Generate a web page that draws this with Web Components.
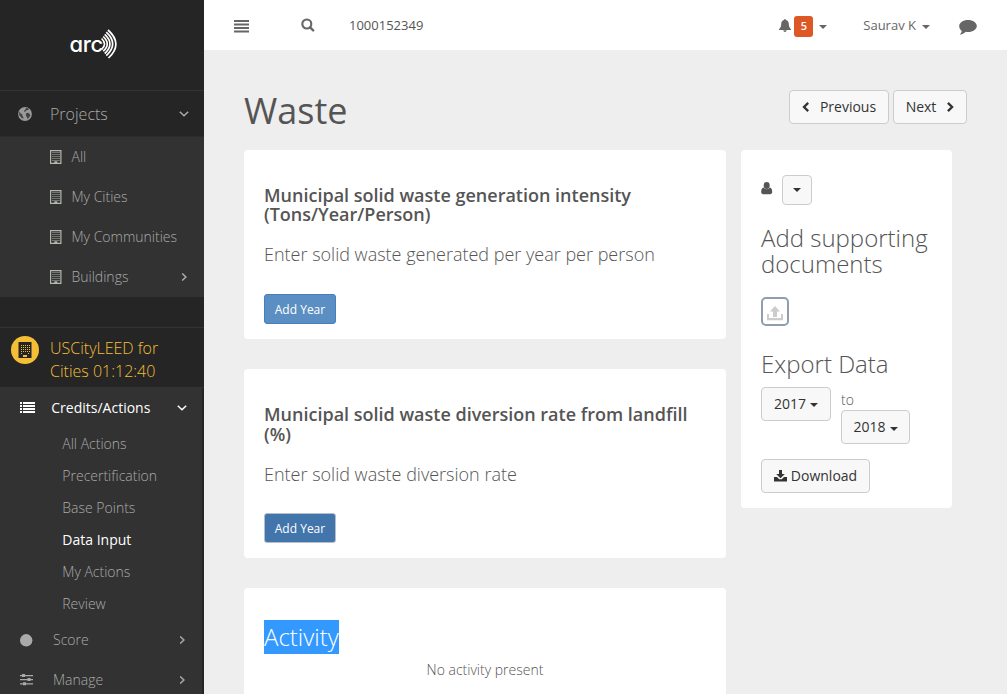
<!DOCTYPE html>
<html lang="en">
<head>
<meta charset="utf-8">
<title>Waste</title>
<style>
html,body{margin:0;height:100%;overflow:hidden}
body{font-family:"Open Sans",sans-serif;font-size:14px;color:#555;background:#eee}
</style>
</head>
<body>
<arc-app></arc-app>
<script>
const ICONS = {
  hamburger: '<svg width="15" height="13" viewBox="0 0 15 13"><path fill="currentColor" d="M0 0h15v2H0zM0 3.500h15v2H0zM0 7h15v2H0zM0 10.600h15v2H0z"/></svg>',
  search: '<svg width="14" height="14" viewBox="0 0 14 14"><circle cx="5.800" cy="6" r="4.500" fill="none" stroke="currentColor" stroke-width="2.100"/><path d="M9.200 9.400l3 3.100" stroke="currentColor" stroke-width="2.400" stroke-linecap="round"/></svg>',
  bell: '<svg width="12" height="13" viewBox="0 0 12 13"><path fill="currentColor" d="M6 0c.6 0 .9.4.9.9C9 1.400 9.800 3 9.800 5c0 2.600.8 4 2.200 5.200V11H0v-.8C1.400 9 2.200 7.600 2.200 5c0-2 .8-3.600 2.900-4.100 0-.5.3-.9.9-.9zM4.300 11.300h3.400C7.500 12.400 7 13 6 13s-1.500-.6-1.700-1.700z"/></svg>',
  comment: '<svg width="18" height="15" viewBox="0 0 18 15"><path fill="currentColor" d="M9 0c5 0 8.800 2.700 8.800 6s-3.800 6-8.800 6c-.8 0-1.500-.1-2.200-.2C5.200 13.300 3.500 14.300 1.300 14.600c-.4 0-.5-.3-.2-.6.8-.8 1.500-1.500 1.700-3.100C1.200 9.800.2 8 .2 6 .2 2.700 4 0 9 0z"/></svg>',
  globe: '<svg width="14" height="14" viewBox="0 0 14 14"><circle cx="7" cy="7" r="6.900" fill="#999"/><path fill="#252525" d="M7.600 1.300l1.600-.3 1.700 1-.8 1.100-1.500.2-.9 1-1.700.6.300-1.500 1.300-.8zM8 6.200l1.800-.4 1.900 1 .6 1.600-1.600 2.700-1.300 1-.5-2.100-1-1.300zM1.200 4.600l1.500 2 1.600.8.200 1.700 1 1.300-.3 1.400-1.800-1L1.200 8z" opacity=".75"/></svg>',
  building: '<svg width="12" height="14" viewBox="0 0 12 14"><path fill="none" stroke="#b4b9ae" stroke-width="1.200" d="M.6.600h10.300v12.700H.6z"/><path stroke="#b4b9ae" stroke-width="1" stroke-dasharray="1 1" d="M2.500 2.500h7M2.500 4.500h7M2.500 6.500h7M2.500 8.500h7M2.500 10.500h7"/><path fill="#b4b9ae" d="M4.300 11.300h3v2h-3z"/></svg>',
  darkbuilding: '<svg width="14" height="16" viewBox="0 0 14 16"><path fill="#252525" d="M.5 0h13v16H.5z"/><path stroke="#f0b93a" stroke-width="1" stroke-dasharray="1 1" d="M3 3.500h9M3 5.500h9M3 7.500h9M3 9.500h9M3 11.500h2M10 11.500h2"/><path fill="#f4be37" d="M5 13h4v2H5z"/></svg>',
  list: '<svg width="15" height="12" viewBox="0 0 15 12"><path fill="currentColor" d="M0 0h2v2H0zM3 0h12v2H3zM0 3h2v2H0zM3 3h12v2H3zM0 6h2v2H0zM3 6h12v2H3zM0 9h2v2H0zM3 9h12v2H3z"/></svg>',
  dot: '<svg width="13" height="13" viewBox="0 0 13 13"><circle cx="6.200" cy="6.300" r="6.200" fill="currentColor"/></svg>',
  sliders: '<svg width="13" height="12" viewBox="0 0 13 12"><path fill="currentColor" d="M0 1h13v1.200H0zM0 5h13v1.200H0zM0 9.200h13v1.200H0zM2 .1h3v3H2zM7.500 4.100h3v3h-3zM3 8.300h3v3H3z"/></svg>',
  down: '<svg width="10" height="6" viewBox="0 0 10 6"><path d="M.8.800L5 4.800 9.200.8" fill="none" stroke="currentColor" stroke-width="1.500"/></svg>',
  right: '<svg width="6" height="8" viewBox="0 0 6 8"><path d="M1.200.500l3.700 3.500L1.200 7.500" fill="none" stroke="currentColor" stroke-width="1.500"/></svg>',
  caret: '<svg width="8" height="4" viewBox="0 0 8 4"><path fill="currentColor" d="M0 0h8L4 4z"/></svg>',
  prev: '<svg width="8" height="10" viewBox="0 0 8 10"><path d="M6.200.900L2 5l4.200 4.100" fill="none" stroke="currentColor" stroke-width="2.300"/></svg>',
  next: '<svg width="8" height="10" viewBox="0 0 8 10"><path d="M1.900.900L6.100 5 1.900 9.100" fill="none" stroke="currentColor" stroke-width="2.300"/></svg>',
  user: '<svg width="12" height="13" viewBox="0 0 12 13"><ellipse cx="5.700" cy="3.500" rx="3" ry="3.400" fill="currentColor"/><path fill="currentColor" d="M2.700 5.600C3.500 6.700 4.500 7.300 5.700 7.300S7.900 6.700 8.700 5.600c1.900.3 2.500 2.100 2.500 4.500 0 1.300-.8 2.200-2 2.200h-7C1 12.300.2 11.400.2 10.100c0-2.400.6-4.200 2.500-4.500z"/></svg>',
  upload: '<svg width="16" height="15" viewBox="0 0 16 15"><path fill="currentColor" d="M8 0l5 5.500h-3V11H6V5.500H3zM0 8h2v4h12V8h2v6.300H0z"/></svg>',
  download: '<svg width="13" height="12" viewBox="0 0 13 12"><path fill="currentColor" d="M5 0h3v4h2.800L6.500 8.200 2.200 4H5zM0 7h3l2.200 2.200h2.600L10 7h3v4.500H0z"/></svg>',
  waves: '<svg width="17" height="30" viewBox="0 0 17 30"><g fill="none" stroke="currentColor" stroke-width="1.700"><path d="M7 1Q22.500 15 7.500 29"/><path d="M5.300 3.200Q18 15 5.300 26.600"/><path d="M3.700 5.400Q14.200 15 3.700 24.500"/><path d="M2.200 7.500Q10.300 15 2.200 22.200"/><path d="M.6 9.500Q6.500 15 .6 20.300"/></g></svg>'
};
function define(name, css, html) {
  customElements.define(name, class extends HTMLElement {
    connectedCallback() {
      if (this.shadowRoot) return;
      const root = this.attachShadow({mode: 'open'});
      root.innerHTML = `<style>*{box-sizing:border-box}${css}</style>` + (typeof html === 'function' ? html(this) : html);
    }
  });
}
const ic = n => `<app-icon name="${n}"></app-icon>`;

define('app-icon', ':host{display:inline-flex;flex:none}svg{display:block}', el => ICONS[el.getAttribute('name')]);

define('nav-item', `
:host{display:grid;box-sizing:border-box;grid-template-columns:var(--icon,50px) 1fr auto;align-items:center;height:var(--h,40px);color:#aaa;font-weight:300;font-size:14px;padding-right:var(--end,17px);white-space:nowrap}
:host([on]){color:#fff;font-weight:400}
.i{padding-left:var(--start,20px);display:flex}
.t{padding-bottom:var(--lift,2px)}`,
el => `<span class="i">${el.getAttribute('icon') ? ic(el.getAttribute('icon')) : ''}</span><span class="t"><slot></slot></span>${el.getAttribute('arrow') ? ic(el.getAttribute('arrow')) : ''}`);

define('side-bar', `
:host{display:flex;flex-direction:column;background:#252525;height:694px;overflow:hidden}
.logo{height:91px;flex:none;border-bottom:1px solid #333;padding:29px 0 0 69.500px;display:flex;color:#fff}
.word{font:450 22px/30px Inter,sans-serif;font-feature-settings:"cv11";letter-spacing:-.3px;width:31.500px}
.projects{height:46px;flex:none;--h:46px;--start:18px;--end:15px;--lift:0;border-bottom:1px solid #2c2c2c}
.projects nav-item{font-size:16px}
.sub{background:#323232;height:160px;flex:none;--icon:71.500px;--start:50px}
.project{height:91px;flex:none;border-bottom:1px solid #333}
.project .line{margin-top:30px;border-top:1px solid #333;padding:8px 0 0 11px;display:flex;gap:11px;color:#f4be37;font-weight:300;font-size:16px;line-height:23px}
.project .name{padding-top:1px}
.badge{width:28px;height:28px;border-radius:50%;background:#f4be37;display:flex;align-items:center;justify-content:center}
.menu{flex:none;background:#323232;margin-right:2px;--icon:53px}
.acts{--h:32px;--icon:62.300px}`, `
<div class="logo"><span class="word">arc</span>${ic('waves')}</div>
<div class="projects"><nav-item icon="globe" arrow="down">Projects</nav-item></div>
<div class="sub"><nav-item icon="building">All</nav-item><nav-item icon="building">My Cities</nav-item><nav-item icon="building">My Communities</nav-item><nav-item icon="building" arrow="right">Buildings</nav-item></div>
<div class="project"><div class="line"><span class="badge">${ic('darkbuilding')}</span><span class="name">USCityLEED for<br>Cities 01:12:40</span></div></div>
<div class="menu"><nav-item on icon="list" arrow="down" style="--icon:51.300px;--end:15px">Credits/Actions</nav-item>
<div class="acts"><nav-item>All Actions</nav-item><nav-item>Precertification</nav-item><nav-item>Base Points</nav-item><nav-item on>Data Input</nav-item><nav-item>My Actions</nav-item><nav-item>Review</nav-item></div>
<nav-item icon="dot" arrow="right">Score</nav-item><nav-item icon="sliders" arrow="right">Manage</nav-item></div>`);

define('top-bar', `
:host{display:flex;box-sizing:border-box;align-items:center;height:50px;background:#fff;padding:0 30px 0 30px;color:#666;font-size:13px;line-height:20px}
app-icon[name=hamburger]{margin-top:2px}
app-icon[name=caret]{margin-top:4px}
.id{margin-left:34px;color:#555}
.search{margin-left:52px;display:flex}
.right{margin-left:auto;display:flex;align-items:center}
.n{background:#de5826;color:#fff;font-weight:600;font-size:11px;width:19px;height:21px;line-height:20px;border-radius:3px;text-align:center;margin:2px 6px 0 3px}
.who{margin:0 6px 0 36px}.chat{margin:4px 0 0 29px;display:flex}`, `
${ic('hamburger')}<span class="search">${ic('search')}</span><span class="id">1000152349</span>
<div class="right">${ic('bell')}<span class="n">5</span>${ic('caret')}<span class="who">Saurav K</span>${ic('caret')}<span class="chat">${ic('comment')}</span></div>`);

define('ui-button', `
:host{display:inline-flex;box-sizing:border-box;align-items:center;justify-content:center;gap:var(--gap,4px);height:34px;padding-bottom:2px;border:1px solid #ccc;border-radius:4px;background:#f8f8f8;color:#333;font-size:14px;font-weight:400;white-space:nowrap;flex:none}
::slotted(app-icon){margin-top:2px}
::slotted(app-icon[name=caret]){margin-top:3px}
:host([kind]){height:30px;width:72px;padding-bottom:0;background:#5b8fc3;border-color:#4480bf;border-radius:3px;color:#fff;font-size:12px}
:host([kind=active]){background:#4175ab;border-color:#b7bec6}`, '<slot></slot>');

define('white-card', ':host{display:block;box-sizing:border-box;background:#fff;border-radius:4px;padding:20px}', '<slot></slot>');

define('metric-card', `
:host{display:block;height:189px}
white-card{height:189px}
h4{margin:var(--t,16px) 0 0;font-size:18px;line-height:var(--lh,20px);height:40px;font-weight:600;color:#555}
p{margin:var(--p,17px) 0 0;font-size:18px;line-height:22px;font-weight:300;color:#555}
.action{display:flex;margin-top:var(--a,29px)}`,
'<white-card><h4><slot name="title"></slot></h4><p><slot></slot></p><div class="action"><slot name="action"></slot></div></white-card>');

define('activity-card', `
:host{display:block}white-card{height:140px;padding-top:32px}
mark{display:inline-block;background:#39f;color:#fff;font-size:24px;line-height:34px;font-weight:300;vertical-align:top}
p{margin:6px 0 0;text-align:center;font-weight:300;line-height:20px}`,
'<white-card><div style="height:34px"><mark>Activity</mark></div><p>No activity present</p></white-card>');

define('tools-card', `
:host{display:block}white-card{height:358px;padding-top:25px}
.u{display:flex;gap:9px;align-items:center}.u app-icon:first-child{margin-top:-4px}
.u ui-button{width:30px;height:30px;padding-top:4px;padding-bottom:0}
h3{margin:0;font-weight:300;font-size:24px;line-height:26px;color:#555}
.up{width:28px;height:29px;border:2px solid #929dab;border-radius:5px;display:flex;align-items:center;justify-content:center;color:#ccc;margin:20px 0 25px;padding-top:3px}
.row{display:flex;gap:10px;margin:10px 0 15px}
.to{line-height:20px;font-weight:300;padding-top:3px}.to ui-button{display:flex;width:69px;padding-bottom:0}`, `
<white-card><div class="u">${ic('user')}<ui-button>${ic('caret')}</ui-button></div>
<h3 style="margin-top:20px">Add supporting documents</h3><div class="up">${ic('upload')}</div><h3>Export Data</h3>
<div class="row"><ui-button style="width:70px">2017${ic('caret')}</ui-button><div class="to">to<ui-button>2018${ic('caret')}</ui-button></div></div>
<ui-button style="width:109px">${ic('download')}Download</ui-button></white-card>`);

define('arc-app', `
:host{display:grid;grid-template-columns:204px 803px;height:694px;overflow:hidden}
main{padding:40px 40px 0;height:644px;overflow:hidden}
header{display:flex;height:60px;gap:4px}
h1{margin:1px auto 0 0;font-size:36px;line-height:40px;font-weight:400;color:#555}
.cols{display:grid;grid-template-columns:482px 211px;gap:15px;align-items:start}
.left{display:grid;gap:30px}`, `
<side-bar></side-bar><div><top-bar></top-bar><main>
<header><h1>Waste</h1><ui-button style="width:100px;--gap:10px">${ic('prev')}Previous</ui-button><ui-button style="width:74px;--gap:10px">Next${ic('next')}</ui-button></header>
<div class="cols"><div class="left">
<metric-card style="--lh:19px"><span slot="title">Municipal solid waste generation intensity (Tons/Year/Person)</span>Enter solid waste generated per year per person<ui-button slot="action" kind="normal">Add Year</ui-button></metric-card>
<metric-card style="--t:15px;--p:19px;--a:28px"><span slot="title">Municipal solid waste diversion rate from landfill (%)</span>Enter solid waste diversion rate<ui-button slot="action" kind="active">Add Year</ui-button></metric-card>
<activity-card></activity-card></div><tools-card></tools-card></div></main></div>`);
</script>
</body>
</html>
